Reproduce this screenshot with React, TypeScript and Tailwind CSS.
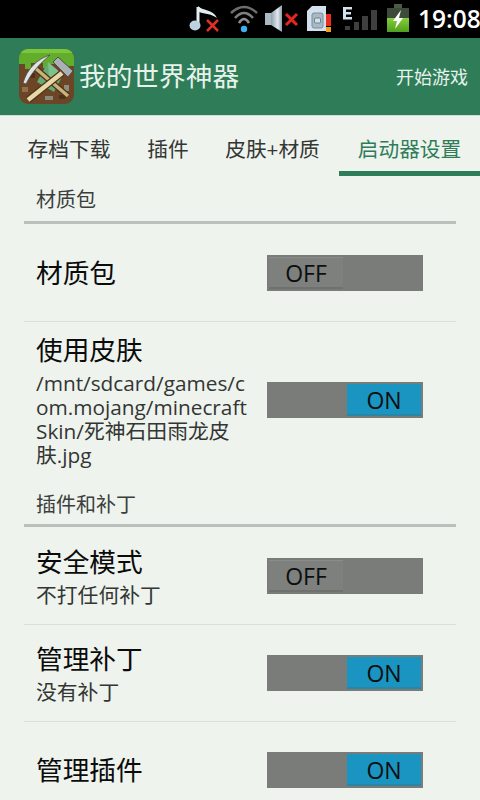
const font = { fontFamily: '"Open Sans", "Noto Sans CJK SC", sans-serif' };

function StatusIcons() {
  return (
    <div className="flex h-[38px] items-center">
      {/* muted music */}
      <svg width="30" height="38" viewBox="0 0 30 38" className="mr-[11px]">
        <path d="M9 7 V25" stroke="#e4edf2" strokeWidth="3" />
        <path d="M9 6 C13 11 24 9 28 18 C23 14 16 14 10 12 Z" fill="#e4edf2" />
        <ellipse cx="6" cy="25.5" rx="5.5" ry="5" fill="#bcd2e0" />
        <path d="M18 20 L29 31 M29 20 L18 31" stroke="#e0302a" strokeWidth="2.5" />
      </svg>
      {/* wifi */}
      <svg width="28" height="38" viewBox="0 0 28 38" className="mr-[7px]" fill="none">
        <path d="M1 13 Q14 1 27 13" stroke="#6e6e6e" strokeWidth="2.5" />
        <path d="M5 18 Q14 8 23 18" stroke="#7f7f7f" strokeWidth="2.5" />
        <path d="M9 23 Q14 15 19 23" stroke="#8e8e8e" strokeWidth="2.5" />
        <circle cx="14" cy="29" r="3.2" fill="#3cb0f0" />
      </svg>
      {/* muted volume */}
      <svg width="34" height="38" viewBox="0 0 34 38" className="mr-[8px]">
        <defs>
          <linearGradient id="cone" x1="0" x2="1" y1="0" y2="0">
            <stop offset="0" stopColor="#8fa0a8" />
            <stop offset="0.6" stopColor="#dfe8ec" />
            <stop offset="1" stopColor="#8f9ea6" />
          </linearGradient>
        </defs>
        <rect x="0" y="13" width="6" height="12" fill="#a9bac2" />
        <path d="M6 13 L17 5 V32 L6 25 Z" fill="url(#cone)" />
        <path d="M21 14 L32 25 M32 14 L21 25" stroke="#e8261f" strokeWidth="3" />
      </svg>
      {/* sim */}
      <svg width="25" height="38" viewBox="0 0 25 38" className="mr-[10px]">
        <path d="M5 6 H19 V31 H0 V11 Z" fill="#d3e1ee" />
        <rect x="5" y="13" width="11" height="15" rx="2" fill="#a8bac6" stroke="#7b8c97" />
        <rect x="7.5" y="18" width="6" height="5" rx="1" fill="#d6e0e6" stroke="#6f808a" />
        <rect x="19" y="14" width="5" height="12" fill="#ea2e1c" />
        <rect x="19" y="27" width="5" height="5" fill="#f2a21c" />
      </svg>
      {/* signal */}
      <svg width="35" height="38" viewBox="0 0 35 38" className="mr-[10px]">
        <path d="M1 7 H10 V9.5 H4 V12 H9 V14.5 H4 V17 H10 V19.5 H1 Z" fill="#d4e2ee" />
        <rect x="3" y="26" width="5" height="4" fill="#3f3f3f" />
        <rect x="12" y="22" width="5" height="8" fill="#3f3f3f" />
        <rect x="20" y="16" width="6" height="14" fill="#3f3f3f" />
        <rect x="29" y="10" width="6" height="20" fill="#3f3f3f" />
      </svg>
      {/* battery */}
      <svg width="22" height="38" viewBox="0 0 22 38" className="mr-[9px]">
        <defs>
          <linearGradient id="cell" x1="0" x2="0" y1="0" y2="1">
            <stop offset="0" stopColor="#86cf3a" />
            <stop offset="1" stopColor="#4f9f1e" />
          </linearGradient>
        </defs>
        <rect x="7" y="4" width="8" height="4" fill="#4a5a44" />
        <rect x="0" y="8" width="22" height="24" fill="#3f4b3a" />
        <rect x="0" y="18" width="22" height="14" fill="url(#cell)" />
        <path d="M14 10 L6 21 L10 21 L8 29 L16 18 L12 18 Z" fill="#ffffff" />
      </svg>
      <span className="w-[60px] text-[24.5px] font-semibold leading-none text-white" style={{ fontFamily: '"Open Sans", sans-serif' }}>
        19:08
      </span>
    </div>
  );
}

function AppIcon() {
  return (
    <svg width="55" height="55" viewBox="0 0 55 55" className="rounded-[9px]">
      <rect width="55" height="55" fill="#6b4526" />
      <path d="M0 0 H55 V17 H50 V22 H43 V15 H31 V19 H24 V14 H12 V20 H6 V15 H0 Z" fill="#63ad2d" />
      <rect x="0" y="0" width="55" height="4" fill="#7dc63a" />
      <rect x="3" y="38" width="6" height="5" fill="#8f6f4c" />
      <rect x="26" y="47" width="8" height="4" fill="#8a8a7a" />
      <rect x="45" y="36" width="5" height="6" fill="#8d8d7c" />
      <rect x="40" y="46" width="6" height="4" fill="#4e3119" />
      <rect x="11" y="24" width="5" height="5" fill="#4e3119" />
      <path d="M29 13 L44 26 L35 43 L18 33 Z" fill="#62ab72" />
      <path d="M29 13 L44 26 L30 29 Z" fill="#7cc28a" />
      <path d="M15 18 L49 47" stroke="#4f3319" strokeWidth="6" />
      <path d="M15 18 L49 47" stroke="#c9b27a" strokeWidth="3.5" />
      <path d="M43 24 L9 51" stroke="#4f3319" strokeWidth="7" />
      <path d="M43 24 L9 51" stroke="#e8d8a8" strokeWidth="4.5" />
      <path d="M4 34 C8 20 18 10 31 6 C23 13 14 21 7 35 Z" fill="#dfe3e3" stroke="#4a4a44" strokeWidth="0.8" />
      <path d="M34 13 L39 8 L54 22 L49 28 Z" fill="#aab0b3" stroke="#4a4e50" strokeWidth="1" />
    </svg>
  );
}

function Switch({ on }: { on: boolean }) {
  return (
    <div className={`flex h-9 w-[156px] shrink-0 items-center bg-[#797c79] px-[2px] ${on ? "justify-end" : "justify-start"}`}>
      <div
        className={`flex h-8 w-[74px] items-center justify-center border-t border-b-2 pt-[2px] text-[23px] leading-none text-[#0c0f10] ${
          on ? "border-t-[#1a94c0] border-b-[#2a86a5] bg-[#1a94c0]" : "border-t-[#898c89] border-b-[#6e716e] bg-[#7d807d]"
        }`}
      >
        {on ? "ON" : "OFF"}
      </div>
    </div>
  );
}

function SectionHeader({ title, className }: { title: string; className: string }) {
  return (
    <div className={`mx-6 flex items-center border-b-[3px] border-[#bcc0bc] pl-[12px] pt-[3px] text-[20px] leading-none text-[#3b3e3b] ${className}`}>
      {title}
    </div>
  );
}

function Row({
  title,
  summary,
  on,
  className,
  divider = true,
}: {
  title: string;
  summary?: string;
  on: boolean;
  className: string;
  divider?: boolean;
}) {
  return (
    <div className={`mx-6 flex items-center ${className} ${divider ? "border-b border-[#d9dfd9]" : ""}`}>
      <div className="w-[243px] shrink-0 pl-[12px] pr-[17px]">
        <div className="text-[26.7px] leading-[34px] text-[#0b0b0b]">{title}</div>
        {summary && <div className="mt-[4px] break-all text-[20.8px] leading-[24px] text-[#333633]">{summary}</div>}
      </div>
      <Switch on={on} />
    </div>
  );
}

export default function App() {
  return (
    <div className="h-[800px] w-[480px] overflow-hidden bg-[#eef3ee]" style={font}>
      <div className="flex h-[38px] items-center justify-end bg-black pr-[2px]">
        <StatusIcons />
      </div>

      <div className="flex h-[78px] items-center justify-between border-b border-[#d3d8d3] bg-[#2e7d58] pl-[19px] pr-3">
        <div className="flex items-center gap-[5px]">
          <AppIcon />
          <span className="text-[26.7px] leading-none text-[#e8f2ec]">我的世界神器</span>
        </div>
        <span className="text-[18px] leading-none text-[#e8f2ec]">开始游戏</span>
      </div>

      <div className="flex h-[60px] items-center text-[20.7px] leading-none text-[#333633]">
        <div className="flex h-full w-[138px] items-center justify-center pt-[6px]">存档下载</div>
        <div className="flex h-full w-[58px] items-center justify-center pl-[2px] pt-[6px]">插件</div>
        <div className="flex h-full w-[143px] items-center justify-center pl-[10px] pt-[6px]">皮肤+材质</div>
        <div className="flex h-full w-[141px] items-center justify-center border-b-[5px] border-[#2e7d58] pt-[11px] text-[#2e7d58]">
          启动器设置
        </div>
      </div>

      <SectionHeader title="材质包" className="h-[48px]" />
      <Row title="材质包" on={false} className="h-[98px]" />
      <Row
        title="使用皮肤"
        summary="/mnt/sdcard/games/com.mojang/minecraftSkin/死神石田雨龙皮肤.jpg"
        on
        className="h-[160px] pb-[4px]"
        divider={false}
      />
      <SectionHeader title="插件和补丁" className="h-[45px]" />
      <Row title="安全模式" summary="不打任何补丁" on={false} className="h-[98px]" />
      <Row title="管理补丁" summary="没有补丁" on className="h-[97px]" />
      <Row title="管理插件" on className="h-[96px]" divider={false} />
    </div>
  );
}
